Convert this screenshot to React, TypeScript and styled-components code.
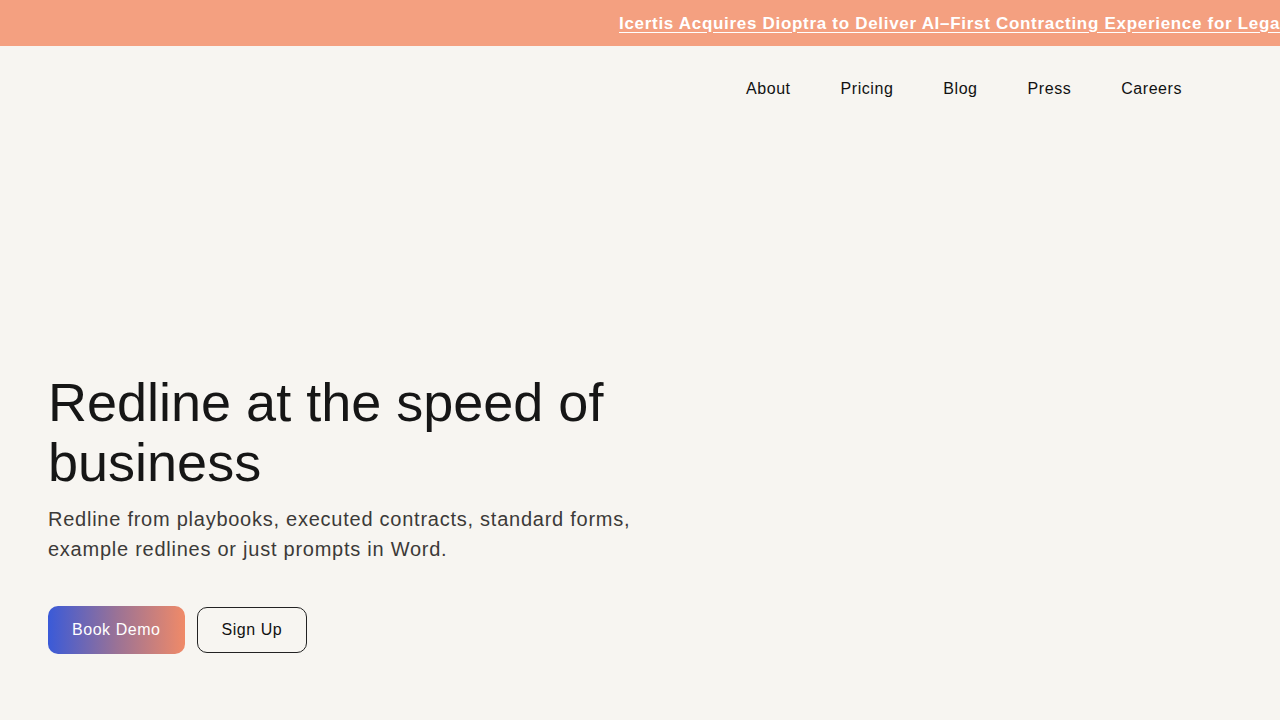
import React from "react";
import styled, { createGlobalStyle } from "styled-components";

const Global = createGlobalStyle`
  html, body { margin: 0; padding: 0; background: #f7f5f1; }
  body { font-family: "Liberation Sans", Arial, sans-serif; }
  * { box-sizing: border-box; }
`;

const Page = styled.div`
  width: 1280px;
  height: 720px;
  overflow: hidden;
  display: flex;
  flex-direction: column;
  background: #f7f5f1;
`;

const Banner = styled.div`
  height: 46px;
  flex: none;
  background: #f4a080;
  display: flex;
  align-items: center;
  padding: 1px 0 0 619px;
  overflow: hidden;
  white-space: nowrap;
`;

const BannerLink = styled.a`
  flex: none;
  color: #ffffff;
  font-weight: 700;
  font-size: 17px;
  letter-spacing: 0.7px;
  text-decoration: underline;
  text-underline-offset: 3px;
`;

const Nav = styled.nav`
  display: flex;
  justify-content: flex-end;
  gap: 50px;
  padding: 33px 98px 0 0;
  height: 84px;
`;

const NavLink = styled.a`
  color: #111;
  font-size: 16px;
  line-height: 20px;
  letter-spacing: 0.55px;
  text-decoration: none;
`;

const Hero = styled.section`
  flex: 1;
  display: flex;
  flex-direction: column;
  justify-content: flex-end;
  padding: 0 0 66px 48px;
`;

const Title = styled.h1`
  margin: 0;
  width: 600px;
  font-weight: 400;
  font-size: 54px;
  line-height: 60px;
  color: #161616;
`;

const Sub = styled.p`
  margin: 12px 0 0;
  width: 640px;
  font-size: 20px;
  line-height: 30px;
  color: #3c3a38;
  letter-spacing: 0.75px;
`;

const Buttons = styled.div`
  display: flex;
  align-items: center;
  gap: 12px;
  margin-top: 42px;
`;

const Button = styled.a<{ $primary?: boolean }>`
  height: ${(p) => (p.$primary ? "48px" : "46px")};
  padding: 0 24px;
  display: inline-flex;
  align-items: center;
  border-radius: 10px;
  font-size: 16px;
  letter-spacing: 0.55px;
  text-decoration: none;
  color: ${(p) => (p.$primary ? "#fff" : "#111")};
  background: ${(p) =>
    p.$primary ? "linear-gradient(90deg, #3a5ad8 0%, #9a7296 50%, #f08a68 100%)" : "transparent"};
  border: ${(p) => (p.$primary ? "none" : "1px solid #222")};
`;

export default function App() {
  return (
    <Page>
      <Global />
      <Banner>
        <BannerLink href="#">
          Icertis Acquires Dioptra to Deliver AI–First Contracting Experience for Legal Teams
        </BannerLink>
      </Banner>
      <Nav>
        {["About", "Pricing", "Blog", "Press", "Careers"].map((n) => (
          <NavLink key={n} href="#">
            {n}
          </NavLink>
        ))}
      </Nav>
      <Hero>
        <Title>Redline at the speed of business</Title>
        <Sub>
          Redline from playbooks, executed contracts, standard forms, example redlines or just prompts in Word.
        </Sub>
        <Buttons>
          <Button $primary href="#">Book Demo</Button>
          <Button href="#">Sign Up</Button>
        </Buttons>
      </Hero>
    </Page>
  );
}
